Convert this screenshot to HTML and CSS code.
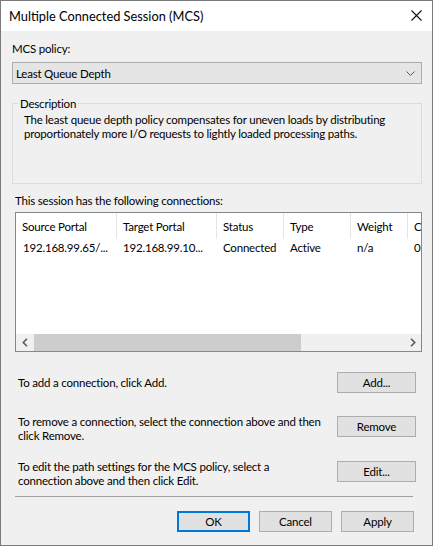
FILE: index.html
```html
<!DOCTYPE html>
<html>
<head>
<meta charset="utf-8">
<link rel="stylesheet" href="styles.css">
</head>
<body>
<div class="window">
  <div class="titlebar">
    <span class="title">Multiple Connected Session (MCS)</span>
    <svg class="close" width="11" height="11" viewBox="0 0 11 11"><path d="M0.5 0.5L10.5 10.5M10.5 0.5L0.5 10.5" stroke="#111" stroke-width="1.1" fill="none"/></svg>
  </div>
  <div class="content">
    <div class="label">MCS policy:</div>
    <div class="combo">
      <span>Least Queue Depth</span>
      <svg class="combo-arrow" width="9" height="5" viewBox="0 0 9 5"><path d="M0.5 0.5L4.5 4.5L8.5 0.5" stroke="#555" stroke-width="1" fill="none"/></svg>
    </div>
    <fieldset class="group">
      <legend>Description</legend>
      <p class="desc">The least queue depth policy compensates for uneven loads by distributing proportionately more I/O requests to lightly loaded processing paths.</p>
    </fieldset>
    <div class="label label-conn">This session has the following connections:</div>
    <div class="listview">
      <div class="lv-header">
        <div class="cell c1">Source Portal</div>
        <div class="cell c2">Target Portal</div>
        <div class="cell c3">Status</div>
        <div class="cell c4">Type</div>
        <div class="cell c5">Weight</div>
        <div class="cell c6">C</div>
      </div>
      <div class="lv-row">
        <div class="cell c1">192.168.99.65/...</div>
        <div class="cell c2">192.168.99.10...</div>
        <div class="cell c3">Connected</div>
        <div class="cell c4">Active</div>
        <div class="cell c5">n/a</div>
        <div class="cell c6">0</div>
      </div>
      <div class="lv-space"></div>
      <div class="hscroll">
        <div class="sb-arrow"><svg width="6" height="9" viewBox="0 0 6 9"><path d="M5 0.8L1.3 4.5L5 8.2" stroke="#5a5a5a" stroke-width="1.6" fill="none"/></svg></div>
        <div class="sb-track"><div class="sb-thumb"></div></div>
        <div class="sb-arrow"><svg width="6" height="9" viewBox="0 0 6 9"><path d="M1 0.8L4.7 4.5L1 8.2" stroke="#5a5a5a" stroke-width="1.6" fill="none"/></svg></div>
      </div>
    </div>
    <div class="action action-add">
      <div class="action-text">To add a connection, click Add.</div>
      <button class="btn btn-side">Add...</button>
    </div>
    <div class="action action-top action-remove">
      <div class="action-text">To remove a connection, select the connection above and then click Remove.</div>
      <button class="btn btn-side">Remove</button>
    </div>
    <div class="action action-top action-edit">
      <div class="action-text">To edit the path settings for the MCS policy, select a connection above and then click Edit.</div>
      <button class="btn btn-side">Edit...</button>
    </div>
    <div class="sep"></div>
    <div class="footer">
      <button class="btn btn-foot btn-default">OK</button>
      <button class="btn btn-foot">Cancel</button>
      <button class="btn btn-foot">Apply</button>
    </div>
  </div>
</div>
</body>
</html>
```
FILE: styles.css
```css
* { box-sizing: border-box; }
html, body { margin: 0; padding: 0; background: #fff; }
body {
  font-family: Lato, "Noto Sans", sans-serif;
  font-size: 11.5px;
  letter-spacing: -0.2px;
  color: #000;
}
.window {
  width: 433px;
  height: 546px;
  border: 1px solid #7a7a7a;
  background: #f0f0f0;
  display: flex;
  flex-direction: column;
}
.titlebar {
  height: 30px;
  background: #fff;
  display: flex;
  align-items: center;
  justify-content: space-between;
  padding: 0 10px 0 8px;
  flex: none;
}
.title { font-size: 12.8px; letter-spacing: 0; }
.close { margin-top: -1px; }
.content {
  padding: 10px 10px 0 11px;
  display: flex;
  flex-direction: column;
}
.label { line-height: 15px; height: 15px; }
.combo {
  margin-top: 6px;
  height: 22px;
  border: 1px solid #adadad;
  background: #e5e5e5;
  display: flex;
  align-items: center;
  justify-content: space-between;
  padding: 0 6px 0 3px;
}
.group {
  margin: 12px 0 0 0;
  padding: 0 0 0 11px;
  border: 1px solid #dcdcdc;
  min-width: 0;
}
.group legend {
  padding: 0 2px;
  margin-left: -6px;
  line-height: 15px;
}
.desc {
  margin: 2px 0 0 0;
  height: 70px;
  line-height: 14px;
  padding-right: 10px;
}
.label-conn { margin-top: 9px; padding-left: 3px; }
.listview {
  margin: 4px 0 0 3px;
  height: 140px;
  border: 1px solid #828790;
  background: #fff;
  display: flex;
  flex-direction: column;
  overflow: hidden;
}
.lv-header, .lv-row { display: flex; flex: none; white-space: nowrap; }
.lv-header { height: 26px; }
.lv-row { height: 17px; }
.cell {
  flex: none;
  padding-left: 6px;
  overflow: hidden;
  display: flex;
  align-items: center;
}
.lv-header .cell { border-right: 1px solid #e5e5e5; }
.c1 { width: 101px; }
.c2 { width: 100px; }
.c3 { width: 67px; }
.c4 { width: 67px; }
.c5 { width: 57px; }
.c6 { width: 14px; border-right: none !important; }
.lv-row .c1 { padding-left: 7px; }
.lv-space { flex: 1; }
.hscroll {
  height: 17px;
  flex: none;
  display: flex;
  background: #f0f0f0;
}
.sb-arrow {
  width: 17px;
  flex: none;
  display: flex;
  align-items: center;
  justify-content: center;
}
.sb-track { flex: 1; padding: 0 0 0 1px; display: flex; }
.sb-thumb { width: 267px; background: #cdcdcd; }
.action {
  display: flex;
  justify-content: space-between;
  padding: 0 6px 0 6px;
}
.action-add { margin-top: 20px; align-items: center; }
.action-top { align-items: flex-start; }
.action-top .btn { margin-top: 1px; }
.action-remove { margin-top: 22px; }
.action-edit { margin-top: 17px; }
.action-text { line-height: 14px; max-width: 306px; }
.btn {
  font-family: inherit;
  font-size: 11.5px;
  letter-spacing: -0.2px;
  color: #000;
  background: #e1e1e1;
  border: 1px solid #adadad;
  height: 21px;
  padding: 0;
  margin: 0;
  flex: none;
}
.btn-side { width: 79px; }
.sep {
  margin: 8px 9px 0 3px;
  height: 1px;
  background: #a0a0a0;
}
.footer {
  margin-top: 14px;
  display: flex;
  justify-content: flex-end;
  gap: 9px;
  padding-right: 8px;
}
.btn-foot { width: 73px; }
.btn-default { border: 2px solid #0078d7; }
```
